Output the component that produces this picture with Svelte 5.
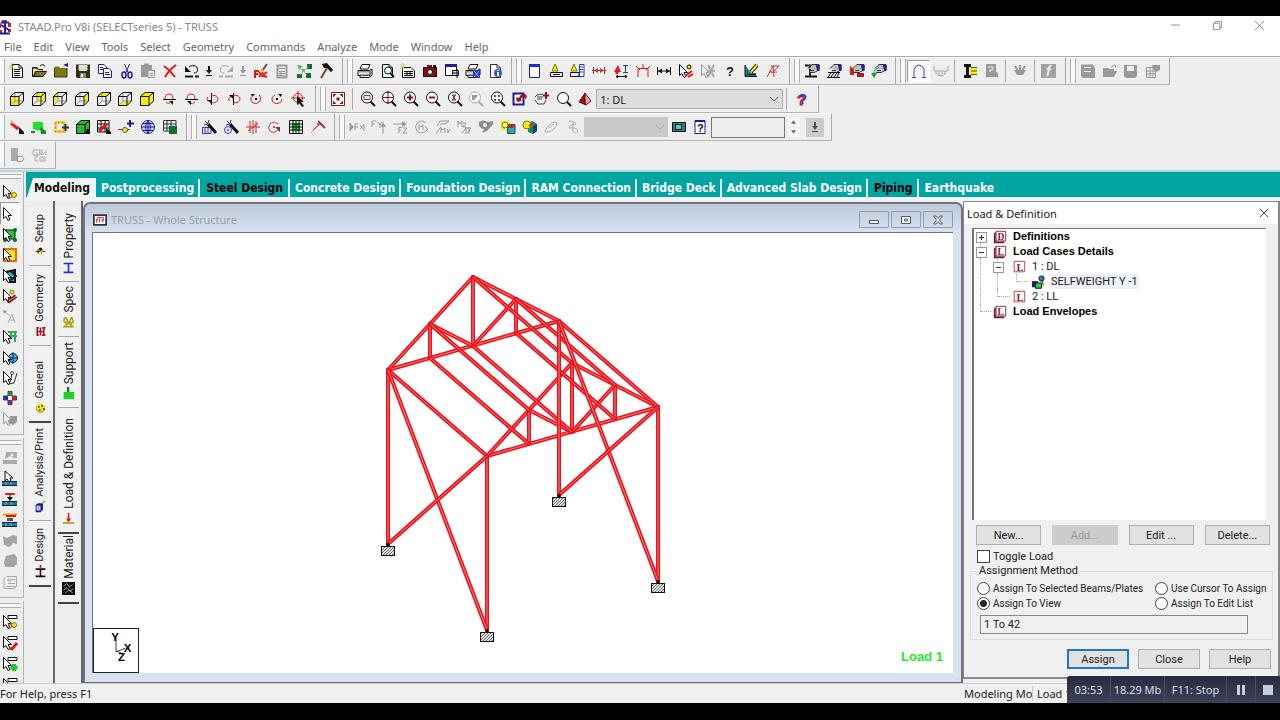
<script lang="ts">
  const fl = (d: string, c: string) => `<path d="${d}" fill="${c}"/>`;
  const st = (d: string, c: string, w = 1) => `<path d="${d}" fill="none" stroke="${c}" stroke-width="${w}"/>`;
  const dot = (x: number, y: number, r: number, c: string, s = 'none') =>
    `<circle cx="${x}" cy="${y}" r="${r}" fill="${c}" stroke="${s}"/>`;
  const txt = (x: number, y: number, size: number, c: string, t: string) =>
    `<text x="${x}" y="${y}" font-size="${size}" font-weight="bold" fill="${c}">${t}</text>`;

  const K = '#111';
  const G = '#999';
  const R = '#dd1a1a';
  const B = '#1c1c9c';
  const Y = '#f6ee10';
  const O = '#7d7a12';
  const GR = '#12a32c';

  const cube = (face: string, color = Y) =>
    fl(face, color) +
    st('M6 2V10H14M6 10L2 14', '#999') +
    st('M1.5 5.5H10v9H1.5zL6 1.5H14.5L10 5.5M14.5 1.5V10L10 14.5', K);
  const solidCube = (c: string) =>
    fl('M1.5 5.5L6 1.5H14.5V10L10 14.5H1.5z', c) + st('M1.5 5.5H10v9H1.5zL6 1.5H14.5L10 5.5M14.5 1.5V10L10 14.5', K);
  const lens = (inner: string, c = K) =>
    dot(7, 6.5, 5.5, '#fff', c) + st('M10.5 10.5L15 15', c, 2) + inner;
  const page = (c = K) => `<path d="M3.5 1.5H10L13.5 5V14.5H3.5z" fill="#fff" stroke="${c}"/>` + st('M10 1.5V5H13.5', c);
  const cursor = '<path d="M1.5 1.5V12.5L4 10.5L6 14.5L8 13.5L6 9.5H9.5z" fill="#fff" stroke="#111"/>';
  const grayCursor = '<path d="M1.5 1.5V12.5L4 10.5L6 14.5L8 13.5L6 9.5H9.5z" fill="#eee" stroke="#999"/>';
  const disk = (c: string) => fl('M1 1.5H15V15H2L1 14z', c) + fl('M4 2.5H12V8H4zM5 10.5H11V14H5z', '#ddd');
  const printer = fl('M5 1H13L11 6H3z', '#fff') + st('M5 1.5H13L11 6H3zM1 7.500H13V12.500H1zM3 12V14.5H12L15 12V6L13 7', K) + fl('M1.5 8H12.5V9.500H1.5zM3 11H12V12.5H3z', '#999');
  const wand = st('M7 5L15 14', K, 3) + st('M4 2L8 6M8 1L7 4M3 6L6 5', '#333');
  const beamBase = fl('M0 10H15V14H0z', '#1976a6') + st('M0 10.5H15M0 14.5H15', '#123', 1) + st('M4 11V14M9 11V14', '#6cc');
  const hand = fl('M7 1H15V7H12L9 9H5L9 6H4L7 4z', '#bbb') + st('M4 5.500L8 1.500H15V7L10 9.500H5M6 7.500H10', '#333') + fl('M12 2H15.5V8H13z', B);

  const icons: Record<string, string> = {
    app: fl('M5 1H10V3H5zM1 5L4 4V9H1zM11 4H14V8H11zM2 11H5V14H2zM11 10H14V13H11z', '#c2203a') + st('M4 3.500H12M3 14.500H13M8 3V15M4 6L12 11', B, 2),
    new: page() + st('M5 6.5H11M5 8.5H11M5 10.5H11M5 12.5H11', K) + st('M0 2L5 6M0 6L5 2M2.5 0V7', '#d6c944'),
    open: fl('M1 5H6L7 6H12V8H15L12 14H1z', O) + fl('M2 6H6L7 7H11V8H4L2 12z', '#f2ec8a') + st('M1.5 13.5V4.5H6L7 6.5H11.5M3 13.5L5 8.5H15.5L12 13.5H1.5M9 3Q12 0 14 3.5', K),
    close: fl('M1 5L2 3.5H6L7 5H14V14H1z', O) + st('M1.5 5V14H14V5', '#3a390b') + fl('M10 2L15 0V4z', B),
    save: disk('#31310e') + fl('M3.5 2H12.5V7H3.5z', '#ddd') + fl('M5 10H11V15H5z', '#888') + fl('M6 11H8V14H6z', '#fff'),
    copy: '<path d="M1.500 1.500H7L9.500 4V10.500H1.500z" fill="#fff" stroke="#1c1c9c"/><path d="M6.500 5.500H12L14.500 8V14.500H6.500z" fill="#fff" stroke="#1c1c9c"/>' + st('M3 4.500H6M3 6.500H6M8 9.500H12M8 11.500H13', B),
    cut: st('M5.500 1L9 9.500M10.500 1L7 9.500', '#334') + `<ellipse cx="5" cy="12" rx="2" ry="3" fill="none" stroke="${B}" stroke-width="1.500"/><ellipse cx="11" cy="12" rx="2" ry="3" fill="none" stroke="${B}" stroke-width="1.500"/>`,
    paste: fl('M1 2H12V7H8V14H1zM4 0.5H9V3H4z', G) + '<path d="M8 7.500H14.500V14.500H8z" fill="#eee" stroke="#999"/>' + st('M9.500 10.500H13M9.500 12.500H13', G),
    del: st('M2 3Q8 7 13 14M14 2Q7 7 3 14', R, 2),
    undo: st('M5 3.500Q13 1 13.500 6Q14 10 10 10', K, 1) + fl('M1 3L1 9L7 9z', K) + st('M1 13.500H9M11 13.500H15', K, 2),
    redo: st('M11 3.500Q3 1 2.500 6Q2 10 6 10', '#aaa') + fl('M15 3L15 9L9 9z', '#aaa') + st('M1 13.500H5M7 13.500H15', '#aaa', 2),
    down: st('M8 3V8', K, 2) + fl('M5 7H11L8 11z', K) + st('M5 12.500H11', K),
    downGray: st('M8 3V8', G, 2) + fl('M5 7H11L8 11z', G) + st('M5 12.500H11', G),
    paint: st('M3 7V15M2 8H7M4 11H6M7 9L11 14M11 9L7 14M15 9L12 11V13L15 14', R, 2) + st('M10 8L15 1', '#555', 2) + fl('M7 9L10 5L12 8z', '#e8bb20'),
    calc: st('M3.500 2.500H12.500V14.500H3.500z', G, 2) + st('M5 5.500H11M5 8.500H11M5 10.500H11M5 12.500H11M7 8V13', G),
    cells: fl('M11 1H16V6H11zM1 11H6V15H1zM10 10H15V15H10z', '#126e2a') + fl('M1 2L7 3L3 7zM6 6H9V9H6z', '#54b060') + st('M3 4L11 12M12 4L4 12', '#8ac796'),
    hammer: st('M9 5L3 15', '#6d4a24', 2) + fl('M4 1L9 0L15 7L13 9L9 5L6 5z', K),
    print: printer,
    preview: page() + dot(9, 7.5, 3.5, '#dff', K) + st('M11 10L15 14', K, 2),
    report: '<path d="M2.500 4.500H11L14.500 8V14.500H2.500z" fill="#fff" stroke="#111"/>' + st('M4 8.500H13M4 10.500H13M4 12.500H13M7 8V13M10 8V13', K) + st('M0 1L5 6M5 1L0 6M3 0V7', '#d6c944'),
    camera: fl('M1 4H5V2H10V4H15V14H1z', '#7c1313') + st('M1.500 4.500H14.500V13.500H1.500z', '#300') + dot(8, 9, 2.500, '#eee', K) + fl('M11 2H14V4H11z', K),
    pageSetup: '<path d="M1.500 2.500H12.500V12.500H1.500z" fill="#fff" stroke="#111"/>' + fl('M1 1H13V4H1z', B) + '<path d="M8.500 7.500H14.500V12.500H8.500z" fill="#ddd" stroke="#111"/>' + st('M9 10H14M13 6V15', K),
    printPic: printer + fl('M8 7H15V15H8z', '#2436b5') + st('M9 8L14 14M14 8L9 14', '#9af'),
    info: page('#333') + dot(11, 10, 4, '#2c5bd7') + fl('M10 7H12V8H10zM10 9H12V13H10z', '#fff'),
    window: '<path d="M3.500 1.500H13.500V14.500H3.500z" fill="#fff" stroke="#1c1c9c"/>' + fl('M3 1H14V4H3z', '#1933c8'),
    labelA: fl('M4 8L7 1L10 8z', Y) + st('M4 8L7 1L10 8z', O) + '<path d="M2.500 9.500H14.500V13.500H2.500z" fill="#eee" stroke="#111"/>' + st('M5 11.500H12', K),
    labelB: fl('M2 8L5 1L8 8z', Y) + st('M2 8L5 1L8 8z', O) + '<path d="M1.500 9.500H10V13.500H1.500z" fill="#eee" stroke="#111"/><path d="M10.500 1.500H15V13.500H10.500z" fill="#fff" stroke="#2233bb"/>' + st('M11 4H14M11 6.500H14M11 9H14', '#2233bb'),
    dim: st('M1 7.500H15M2.500 4V11M13.500 4V11', R) + fl('M3 7.500L7 5V10zM13 7.500L9 5V10z', '#a44'),
    node: fl('M1 9L5 2L8 9z', R) + st('M4 9V11', R, 3) + st('M10 2.500H15M12.500 3V9M10 9.500H15', '#2436c5') + st('M3 13.500H14M5 12L3 13.500L5 15M12 12L14 13.500L12 15', K),
    frame: st('M3 14V5.500H13V14M1 3L5 7M11 7L15 3M8 1V6', R),
    span: st('M1.500 4V12M14.500 4V12M2 8H14', K) + fl('M2 8L6 5.500V10.500zM14 8L10 5.500V10.500z', K),
    pick: cursor + dot(11, 4, 2, Y, K) + st('M7 13L14 8M10 14L15 11', R, 2),
    pickGray: grayCursor + st('M8 2L14 14M14 2L8 14M7 8H15', '#aaa', 2),
    query: txt(4, 13, 13, K, '?'),
    edit: fl('M2 2L8 10H13V13H2z', '#127d7d') + st('M2 2V13.500H14M4 11.500H13', K) + st('M8 9L14 2', K, 4) + st('M8 9L14 2', Y, 2),
    annotate: st('M2 14L8 3L9 14M4 9H12M6 3H14L7 10', '#c23a3a'),
    beamH: st('M1 2.500H11M1 13.500H13M6 3V13', K, 2) + hand,
    hatchH: hand + st('M1 14.500H14M2 14L5 10M5 14L8 10M8 14L11 10M11 14L13 10M2 9.500H14', K),
    redH: fl('M1 3L5 6V12H1z', R) + hand + fl('M8 10H15V14H8z', '#a32121'),
    greenH: hand + st('M3 14V8L8 4', GR) + fl('M0 10H6L3 15z', GR),
    portal: st('M3 14V6Q5 2 8 2Q11 2 13 6V14', '#4545c8') + st('M1 14.500H5M11 14.500H15', '#a33'),
    uload: st('M1 3V8H15V3M3 8V11M6 8V13M9 8V13M12 8V11M3 10Q8 16 13 10', '#aaa'),
    ibeam: fl('M8 4H15V12H8z', Y) + st('M9 4.500H15M9 8H15M9 11.500H15', '#555') + st('M2 2.500H9M2 13.500H9M5.500 3V13', K, 3),
    sheet: fl('M3 1H13V9L15 10V14H5L3 15z', G) + st('M5 4H10V7H7V9', '#eee', 1),
    basket: st('M3 3L6 8M8 2V8M13 3L10 8', G, 2) + fl('M2 7H14L11 12H5z', G),
    fx: fl('M0 1H15V15H0z', '#a2a2a2') + `<text x="5" y="13" font-size="14" font-weight="bold" font-style="italic" fill="#eee">f</text>`,
    diskG: fl('M1 1.500H13L15 6V15H3L1 13z', G) + fl('M4 4H11V5H4zM4 8H11V9H4z', '#eee'),
    openG: fl('M1 5H6L7 6H12V8H15L12 14H1z', G) + st('M9 4L13 2L14 5', G),
    saveG: fl('M1 2H14V13L12 15H3L1 13z', G) + fl('M4 3H11V8H4z', '#eee'),
    tableG: st('M1.500 4.500H10.500V14.500H1.500zM2 8H10M2 11H10M5 5V14M8 5V14', G) + fl('M7 2H15V7L11 9L8 6z', G),
    cubeF: cube('M1.500 5.500H10V14.500H1.500z'),
    cubeB: cube('M6 1.500H14.500V10H6z'),
    cubeL: cube('M1.500 5.500L6 1.500V10L1.500 14.500z'),
    cubeR: cube('M10 5.500L14.500 1.500V10L10 14.500z'),
    cubeT: cube('M1.500 5.500L6 1.500H14.500L10 5.500z'),
    cubeD: cube('M1.500 14.500L6 10H14.500L10 14.500z'),
    cubeA: solidCube(Y),
    rotX1: st('M2 8.500H15', K) + st('M4 8Q4 3 8 3Q12 3 12 8M5 11Q6 13 9 12', R) + fl('M8 10H12V14z', K),
    rotX2: st('M2 8.500H15', K) + st('M4 8Q4 3 8 3Q12 3 12 8M7 12Q9 14 12 11', R) + fl('M8 10L4 10L8 14z', K),
    rotY1: st('M7.500 2V14', K) + st('M7 4Q14 4 14 8Q14 12 6 12M4 6Q2 8 4 10', R) + fl('M3 9H7V12z', K),
    rotY2: st('M7.500 2V14', K) + st('M7 4Q14 4 14 8Q14 12 7 12M3 10Q2 7 5 5', R) + fl('M3 4H7V8z', K),
    rotZ1: st('M11 4Q14 6 12 10Q9 14 5 12Q2 10 3 6', R) + fl('M3 3H7L4 6zM7 7H9V9H7z', K),
    rotZ2: st('M6 4Q2 6 3 9Q5 14 10 12Q13 11 13 8', R) + fl('M9 3H13L12 6zM7 7H9V9H7z', K),
    rotPick: dot(7, 7, 4.5, 'none', R) + st('M7 0V14M0 7H14', R) + fl('M6 5V14L8 12L11 16L13 15L10 11H13z', K),
    fit: '<path d="M1.500 1.500H14.500V14.500H1.500z" fill="#fff" stroke="#8b1414"/>' + fl('M3 3H6.500L3 6.500zM9.500 3H13V6.500zM3 9.500V13H6.500zM13 9.500V13H9.500zM6.500 6.500H9.500V9.500H6.500z', '#8b1414'),
    zoomWin: lens(st('M4 4.500H10V8.500H4z', '#a33')),
    zoomCross: lens(st('M7 0V13M1 6.500H13', '#8b1414') + fl('M5 2H9L7 0zM5 11H9L7 13z', '#8b1414')),
    zoomIn: lens(st('M4 6.500H10M7 3.500V9.500', '#8b1414', 2)),
    zoomOut: lens(st('M4 6.500H10', '#8b1414', 2)),
    zoomX: lens(st('M5 4H9M5 9H9M5.500 4L8.500 9M8.500 4L5.500 9', '#8b1414')),
    zoomPrev: lens(st('M5 9V5H9M9 4L5 9', G, 2), '#aaa'),
    zoomExt: lens(fl('M4 4H6V6H4zM8 4H10V6H8zM4 8H6V10H4zM8 8H10V10H8z', '#a33')),
    rotateView: '<path d="M1.500 2.500H11.500V13.500H1.500z" fill="#fff" stroke="#1c1c9c" stroke-width="2"/>' + fl('M5 11L4 6L7 7Q9 2 13 3Q16 5 14 8L12 6Q9 6 9 9L10 10z', '#a31616'),
    pan: st('M1 6L3 4L9 3M3 8H8M1 9L4 13H10L12 9M3 6H9', '#444', 1) + st('M12 1V8M9 4.500H15', '#8b1414', 2),
    glass: dot(7, 7, 5.5, '#fff', K) + st('M11 11L15 15', K, 2),
    pyramid: fl('M8 2L2 11L9 14z', '#8b1414') + fl('M8 2L9 14L14 10z', '#eda9a0') + st('M8 2L2 11L9 14L14 10zV14', '#611'),
    help: `<text x="3" y="14" font-size="15" font-weight="bold" fill="#c22" stroke="#c22">?</text>` + txt(4, 13, 15, '#2447b8', '?'),
    beamAdd: st('M2 4L9 10', R, 3) + st('M2 2L5 5', '#f0b020', 2) + fl('M9 7L15 13V15H10V11z', K),
    plateAdd: fl('M2 3H12V10H2z', '#26e02a') + dot(7, 7, 4.500, '#26e02a') + fl('M9 8L15 12V15H10zM0 12H4V14H0z', '#183'),
    surface: st('M2.500 3.500H11.500V12.500H2.500z', '#e87a10', 2) + `<path d="M2.500 3.500H11.500V12.500H2.500z" fill="none" stroke="${Y}" stroke-width="2" stroke-dasharray="2 2"/>` + st('M12.500 5V12M9 8.500H16', '#333', 2),
    solidAdd: solidCube('#27b333') + fl('M12 10H15V15H10z', K),
    gridAdd: st('M1.500 1.500H13V13H1.500zM5 1V13M9 1V13M1 5H13M1 9H13', K) + st('M3 12L11 5', R, 3) + fl('M10 9L15 13V15H10z', K),
    nodeAdd: st('M0 10.500H12', '#c02020') + dot(7, 11, 2.5, Y, '#555') + st('M12 1V8M9 4.500H16', B, 2),
    sphere: dot(8, 8, 6.5, '#cfd5ff', B) + st('M1.500 8H14.500M8 1.500V14.500M3 4.500H13M3 11.500H13M8 2Q3 8 8 14M8 2Q13 8 8 14', B),
    gridLock: st('M1.500 1.500H14V12H1.500zM5 1V12M9 1V12M1 5H14M1 9H14', '#333') + fl('M7 7H15V15H7z', '#126e2a'),
    wandGrid: st('M1.500 8.500H10V14.500H1.500zM4 8V14M7 8V14', '#3436d5') + wand,
    wandNode: dot(5, 11, 3.5, 'none', '#3436d5') + dot(5, 11, 1, '#3436d5') + wand,
    mirror: st('M5 2V14M8 1V15M11 2V14M1 8H15M3 12L13 4', '#cc2a2a'),
    rotCopy: st('M12 5Q9 2 5 4Q1 8 4 12Q8 15 12 11', '#b34646', 1) + fl('M9 8H14V13z', '#733') + dot(8, 8, 1, R),
    gridTable: fl('M4 4H12V12H4z', '#2ad544') + st('M1.500 1.500H14.500V14.500H1.500zM5 1V15M11 1V15M1 5H15M1 11H15M8 1V15M1 8H15', K),
    split: st('M1 14L8 6', '#e7a83a', 1) + st('M8 2L15 9', '#c02a2a', 2) + st('M3 11L9 6', R) + st('M7 5L11 5', B),
    fx1: st('M1 4V12', G) + fl('M1 4L5 8L1 12z', G) + st('M6 11V5H9M6 8H9M11 6L14 10M14 6L11 10M15 5V12', G),
    fy: st('M2 8V2H6M2 5H5M8 3L10 6L12 3M10 6V9', G) + fl('M11 8L13 3L16 8z', G) + st('M13 5V15', G),
    fz: st('M1 5H13M7 8V14M7 8.500H10M7 11H9M11 9H15L11 14H15', G) + fl('M10 2L15 5L10 8z', G),
    mx: st('M12 4Q8 0 3 4Q0 8 3 12Q8 16 13 11M5 11V6L7 8L9 6V11M11 7L14 11', G),
    my: st('M2 7L5 2H14L10 5H5M1 14L6 8M6 14V9L8 11L10 9V14M12 10L14 14M15 10L12 14', G),
    mz: st('M1 8V2L3 5L5 2V8M6 4H9L6 8H9M5 14L9 9H14L10 14M9 8V15M12 8V15', G),
    stress: fl('M1 3Q5 0 10 3L15 2V5L9 12L4 14L6 10Q0 9 1 3z', '#8d8d8d') + dot(7, 6, 2, '#eee'),
    contour: '<path d="M7.500 5.500H15V14.500H7.500z" fill="#29a7d8" stroke="#163"/>' + fl('M8 6H14.500V9H8z', '#c22') + fl('M8 11H11V14H8z', '#27b34c') + fl('M1 2L9 1V5H5V11H1z', Y) + dot(5, 6, 3, '#f9f48d', O),
    contour3d: fl('M6 5L10 2L15 5V12L11 15L6 13z', '#0e8b55') + fl('M11 7L15 5V12L11 15z', '#123a8c') + dot(5, 6, 4, Y, O) + fl('M7 5H11V8H7z', '#d42'),
    shape: st('M2 13Q3 7 11 3L14 4Q13 11 5 13zM6 9L11 5', '#aaa'),
    wave: st('M4 2Q10 2 11 5Q4 6 4 9Q12 8 13 12Q10 16 8 12V3', '#aaa'),
    monitor: '<path d="M1.500 3.500H14.500V12.500H1.500z" fill="#367b7b" stroke="#111"/><path d="M4.500 5.500H10.500V10.500H4.500z" fill="#1ce0e0" stroke="#111"/>',
    ask: '<path d="M3 1.500H13V14.500H3z" fill="#fff" stroke="#1c1c9c"/>' + fl('M3 1H13V3H3z', B) + txt(5, 13, 11, K, '?'),
    dockA: fl('M2 1H9V14H2z', '#aaa') + '<path d="M8.500 9.500H13L15 12L13 14.500H8.500z" fill="#eee" stroke="#999"/>',
    dockB: st('M2 3H9V8H2zM4 8V14H7M6 5V11M11 2V7M8 5L11 8L14 5M15 3V8M9 10H14V14H9zM11 12H13', '#aaa', 1),
    cur: cursor,
    curNode: cursor + dot(12, 11, 2.5, Y, O) + dot(8, 12, 2, 'none', '#a55'),
    curPlate: fl('M3 3H13V12H3z', '#22c932') + st('M3 3H13V12H3z', K) + dot(13, 3, 2, '#163') + dot(13, 13, 2, '#163') + dot(3, 13, 2, '#163') + cursor,
    curSurf: '<path d="M2 2H14V14H2z" fill="#ffe41f" stroke="#e36b12" stroke-width="2"/>' + cursor,
    curSolid: fl('M3 4L13 2V14L5 14z', '#38b4cc') + st('M4 4L13 2V14L6 14M9 3L14 8L7 13', K, 2) + cursor,
    curPhys: cursor + dot(10, 4, 2, Y, O) + st('M6 14L14 8', '#8b1414', 4) + st('M7 13L14 8', '#f08484'),
    curText: st('M3 3L8 7M6 14L10 5L13 14M7 11H12', '#aaa') + fl('M1 1L5 2L2 5z', G),
    curEdge: st('M6 3H15M7 7H15M13 2V13M9 3V10', '#3aa35f', 2) + cursor,
    curSup: dot(11, 8, 4.5, '#37bcd0', K) + st('M11 2V14M5 8H16', B) + cursor,
    curPipe: cursor + st('M15 3L12 13L7 14M10 4L8 12', '#333', 1) + dot(10, 3, 1.500, 'none', '#555'),
    plus: fl('M6 1H10V6H6z', GR) + fl('M1 6H6V10H1z', '#1a2cc0') + fl('M10 6H15V10H10z', '#e01b1b') + fl('M6 10H10V15H6z', '#7c1cb8') + st('M6 1.500H10V6H14.500V10H10V14.500H6V10H1.500V6H6z', '#444'),
    curGray: grayCursor + fl('M8 5H15V11L11 14L7 12z', G),
    loadG: fl('M1 10H15V14H1zM4 2H15V8H12L8 6L3 9z', '#aaa') + dot(10, 5, 1.5, '#eee'),
    loadCur: beamBase + '<path d="M3 0V10L5 8L7 11L9 10L8 7H11z" fill="#fff" stroke="#111"/>',
    loadBeam: beamBase + st('M1 3H15', '#c22', 2) + dot(2, 3, 1.5, '#fdc') + dot(14, 3, 1.5, '#fdc') + fl('M5 6H11L8 10z', K) + st('M8 4V8', K),
    loadTxt: beamBase + st('M1 2.500H15', '#e3a512', 2) + st('M4 4L14 4', R, 2) + fl('M5 6H11V9H5z', '#555'),
    blobA: fl('M1 3L5 5L11 2L15 3V11L11 10L8 14L2 12z', '#a4a4a4'),
    blobB: fl('M4 3L12 1L15 4V11L12 14H3L2 9z', '#a4a4a4'),
    pagesG: st('M4.500 2.500H14.500V12.500H4.500M3 4H2V14.500H13V12.500M6 5H9V7H6zM10 5.500H13M6 9.500H13', '#aaa'),
    selY: '<path d="M6 1.500H15V4.500H6z" fill="#fff" stroke="#111"/>' + cursor + dot(12, 11, 2.5, Y, O) + dot(8, 12, 2, 'none', '#a55'),
    selR: '<path d="M6 1.500H15V4.500H6z" fill="#fff" stroke="#111"/>' + cursor + st('M8 13L10 14L15 8', R, 3),
    selG: '<path d="M6 1.500H15V4.500H6z" fill="#fff" stroke="#111"/>' + cursor + st('M12 8V15M8.500 11.500H15.500', '#1fc733', 4),
    setup: st('M2 8H14M5 5V11', K) + fl('M6 5H12L9 13z', '#d8b90c') + dot(8, 5, 2, K),
    geometry: st('M3 3.500H6M3 12.500H6M4 3V13M8 3V13M12 3V13M10 3.500H14M10 12.500H14M4 8H12', '#9d1a2d', 2),
    general: dot(8, 9, 5, Y, O) + fl('M3 6L7 2L12 4L14 10H3z', Y) + fl('M5 6H7V8H5zM9 5H11V7H9zM6 10H8V12H6zM11 9H13V11H11z', '#333'),
    analysis: fl('M2 6L5 4H11V12L8 15H2z', B) + fl('M3 7H8V13H3z', '#b6c2d6') + st('M10 4L14 1', '#8bc320', 2),
    design: st('M2 14H14M2 5H14M8 5V14', K, 2) + st('M8 0V4', R, 2),
    property: st('M2 3H14M2 14H14M8 3V14', '#1b30e5', 2),
    spec: st('M3 3Q1 8 5 8Q8 8 6 4Q4 1 3 3M11 3Q8 8 12 9Q15 8 13 4Q12 1 11 3M3 13L8 8L13 13z', '#aba40c', 2),
    support: fl('M2 6H15V15H2z', '#1dd128') + fl('M6 0H9V6H6z', '#187c1b'),
    loads: st('M1 13.500H15', '#a9a012', 2) + st('M8 1V11', R, 2) + fl('M5 8H11L8 13z', R),
    material: fl('M0 0H16V16H0z', K) + st('M2 5L6 2L9 6L13 3M2 10L6 7L10 11L14 8M4 14L8 10L13 13', '#bbb', 1),
    def: '<path d="M3.500 1.500H14.500V12.500H3.500z" fill="#fff" stroke="#8b1a2a"/>' + fl('M1 4L3 2V13H14L12 15H1z', '#631a4a') + `<text x="5" y="11" font-size="11" font-weight="bold" font-family="Liberation Serif, serif" fill="#8b1a2a">D</text>`,
    cases: '<path d="M3.500 1.500H14.500V12.500H3.500z" fill="#fff" stroke="#8b1a2a"/>' + fl('M1 4L3 2V13H14L12 15H1z', '#631a4a') + `<text x="5" y="11" font-size="11" font-weight="bold" font-family="Liberation Serif, serif" fill="#8b1a2a">L</text>`,
    load: '<path d="M2.500 1.500H14.500V13.500H2.500z" fill="#fff" stroke="#b0303c"/><text x="5" y="12" font-size="12" font-weight="bold" font-family="Liberation Serif, serif" fill="#8b1a2a">L</text>',
    weight: fl('M1 7H8V14H1z', '#1a1a8c') + fl('M5 9H12V16H5z', '#1edc28') + st('M5 9H12V15H5z', K) + dot(12, 4, 3, '#2a7fa8', K) + st('M13 7L14 12', K),
    doc: '<path d="M1 2.500H15V13.500H1z" fill="#fff" stroke="#333" stroke-width="2"/>' + st('M4 11L5 5H12L11 11M8 5L7 11M3 8H6M9 8H12', '#a22')
  };

  const rows = [
    [
      { width: 348, items: 'new open close save copy cut paste del undo down redo downGray paint calc cells hammer' },
      { width: 169, items: 'print preview report camera pageSetup printPic info' },
      { width: 278, items: 'window labelA labelB dim node frame span pick pickGray query edit annotate' },
      { width: 106, items: 'beamH hatchH redH greenH' },
      { width: 170, items: 'portal uload | ibeam sheet | basket | fx' },
      { width: 104, items: 'diskG openG saveG tableG' }
    ],
    [
      { width: 321, items: 'cubeF cubeB cubeL cubeR cubeT cubeD cubeA rotX1 rotX2 rotY1 rotY2 rotZ1 rotZ2 rotPick' },
      { width: 503, items: 'fit | zoomWin zoomCross zoomIn zoomOut zoomX zoomPrev zoomExt rotateView pan glass pyramid #load | help' }
    ],
    [
      { width: 192, items: 'beamAdd plateAdd surface solidAdd gridAdd nodeAdd sphere gridLock' },
      { width: 148, items: 'wandGrid wandNode mirror rotCopy gridTable split' },
      { width: 497, items: 'fx1 fy fz mx my mz stress contour contour3d shape wave #mode monitor ask #value' }
    ],
    [{ width: 61, items: 'dockA dockB' }]
  ];

  const sideBars = [
    { height: 263, items: 'curNode cur curPlate curSurf curSolid curPhys curText curEdge curSup curPipe plus curGray' },
    { height: 160, items: 'loadG loadCur loadBeam loadTxt blobA blobB pagesG' },
    { height: 101, items: 'selY selR selG selY' }
  ];

  const menus = ['File', 'Edit', 'View', 'Tools', 'Select', 'Geometry', 'Commands', 'Analyze', 'Mode', 'Window', 'Help'];
  const modes = ['Modeling', 'Postprocessing', 'Steel Design', 'Concrete Design', 'Foundation Design', 'RAM Connection', 'Bridge Deck', 'Advanced Slab Design', 'Piping', 'Earthquake'];
  const darkModes = ['Steel Design', 'Piping'];

  const pageTabs = [
    { name: 'Setup', icon: 'setup', size: 59 },
    { name: 'Geometry', icon: 'geometry', size: 80 },
    { name: 'General', icon: 'general', size: 77 },
    { name: 'Analysis/Print', icon: 'analysis', size: 98 },
    { name: 'Design', icon: 'design', size: 66 }
  ];
  const subTabs = [
    { name: 'Property', icon: 'property', size: 75 },
    { name: 'Spec', icon: 'spec', size: 55 },
    { name: 'Support', icon: 'support', size: 71 },
    { name: 'Load & Definition', icon: 'loads', size: 126 },
    { name: 'Material', icon: 'material', size: 70 }
  ];

  const tree = [
    { cells: ['plus first'], icon: 'def', text: 'Definitions', bold: true },
    { cells: ['minus'], icon: 'cases', text: 'Load Cases Details', bold: true },
    { cells: ['line', 'minus'], icon: 'load', text: '1 : DL' },
    { cells: ['line', 'line', 'elbow'], icon: 'weight', text: 'SELFWEIGHT Y -1', selected: true },
    { cells: ['line', 'elbow'], icon: 'load', text: '2 : LL' },
    { cells: ['elbow'], icon: 'cases', text: 'Load Envelopes', bold: true }
  ];

  // one truss outline, drawn twice and joined by purlins
  const bottom = [[295, 137], [337, 125], [380, 113], [423, 100], [466, 88]];
  const top = [[337, 91], [380, 44], [423, 66]];
  const bay = [99, 86];
  const columnHeight = 174;

  const truss = [
    [bottom[0], bottom[4]], [bottom[0], top[1]], [top[1], bottom[4]],
    [top[0], bottom[1]], [top[1], bottom[2]], [top[2], bottom[3]],
    [top[0], bottom[2]], [top[2], bottom[2]]
  ];
  const shift = (p: number[]) => [p[0] + bay[0], p[1] + bay[1]];
  const foot = (p: number[]) => [p[0], p[1] + columnHeight];
  const heads = [bottom[0], shift(bottom[0]), bottom[4], shift(bottom[4])];
  const feet = heads.map(foot);
  const members = [
    ...truss,
    ...truss.map(([a, b]) => [shift(a), shift(b)]),
    ...[...bottom, ...top].map((p) => [p, shift(p)]),
    ...heads.map((p) => [p, foot(p)]),
    [heads[0], feet[1]], [feet[0], heads[1]],
    [heads[2], feet[3]], [feet[2], heads[3]]
  ];

  let activeMode = 'Modeling';
  let method = 'view';
  let toggleLoad = false;
  let assignList = '1 To 42';
</script>

{#snippet icon(name)}
  <svg class="icon" viewBox="0 0 16 16" aria-hidden="true">{@html icons[name]}</svg>
{/snippet}

<div class="screen">
  <header class="titlebar">
    {@render icon('app')}
    <span class="title">STAAD.Pro V8i (SELECTseries 5) - TRUSS</span>
    <button aria-label="Minimize"><svg viewBox="0 0 12 12"><path d="M1 5.500H11" /></svg></button>
    <button aria-label="Restore"><svg viewBox="0 0 12 12"><path d="M1.500 3.500H8.500V10.500H1.500zM3.500 3.500V1.500H10.500V8.500H8.500" /></svg></button>
    <button aria-label="Close"><svg viewBox="0 0 12 12"><path d="M1 1L11 11M11 1L1 11" /></svg></button>
  </header>

  <nav class="menu">
    {#each menus as item}
      <button>{item}</button>
    {/each}
  </nav>

  <div class="toolbars">
    {#each rows as row}
      <div class="row">
        {#each row as bar}
          <div class="bar" style:width="{bar.width}px">
            <span class="grip"></span>
            {#each bar.items.split(' ') as item}
              {#if item === '|'}
                <span class="sep"></span>
              {:else if item === '#load'}
                <select class="load" aria-label="Load case"><option>1: DL</option></select>
              {:else if item === '#mode'}
                <select class="modeshape" aria-label="Mode shape" disabled><option></option></select>
              {:else if item === '#value'}
                <input class="value" aria-label="Value" />
                <span class="spin">
                  <button aria-label="Up"><svg viewBox="0 0 6 4"><path d="M0 4L3 0L6 4z" /></svg></button>
                  <button aria-label="Down"><svg viewBox="0 0 6 4"><path d="M0 0L3 4L6 0z" /></svg></button>
                </span>
                <button class="apply" aria-label="Apply">{@render icon('down')}</button>
              {:else}
                <button class="tool" class:narrow={item.startsWith('down')} class:pressed={item === 'portal'} aria-label={item}>{@render icon(item)}</button>
              {/if}
            {/each}
          </div>
        {/each}
      </div>
    {/each}
  </div>

  <div class="workspace">
    <aside class="sidebars">
      {#each sideBars as bar}
        <div class="sidebar" style:height="{bar.height}px">
          <span class="hgrip"></span>
          {#each bar.items.split(' ') as item}
            <button class="tool" class:pressed={item === 'cur'} aria-label={item}>{@render icon(item)}</button>
          {/each}
        </div>
      {/each}
    </aside>

    <div class="main">
      <nav class="modes">
        {#each modes as mode}
          <button class:active={mode === activeMode} class:dark={darkModes.includes(mode)} on:click={() => (activeMode = mode)}>{mode}</button>
        {/each}
      </nav>

      <div class="content">
        {#each [pageTabs, subTabs] as tabs}
          <div class="tabs">
            {#each tabs as tab}
              <button style:height="{tab.size}px" class:current={tab.name === 'General' || tab.name === 'Load & Definition'}>
                <span>{tab.name}</span>
                {@render icon(tab.icon)}
              </button>
            {/each}
          </div>
        {/each}

        <section class="mdi">
          <div class="caption">
            {@render icon('doc')}
            <span>TRUSS - Whole Structure</span>
            <button aria-label="Minimize"><svg viewBox="0 0 12 12"><path d="M1.500 6.500H10.500V9.500H1.500z" /></svg></button>
            <button aria-label="Restore"><svg viewBox="0 0 12 12"><path d="M1.500 2.500H10.500V9.500H1.500zM4.500 5H7.500V7H4.500z" /></svg></button>
            <button aria-label="Close"><svg viewBox="0 0 12 12"><path d="M1.500 2H4L6 4.500L8 2H10.500L7.500 6L10.500 10H8L6 7.500L4 10H1.500L4.500 6z" /></svg></button>
          </div>
          <div class="canvas">
            <svg class="model" viewBox="0 0 860 440" role="img" aria-label="Truss structure">
              <defs>
                <pattern id="hatch" width="3" height="3" patternUnits="userSpaceOnUse">
                  <rect width="3" height="3" fill="#e4e4e4" />
                  <path d="M0 3L3 0" stroke="#666" />
                </pattern>
              </defs>
              {#each members as [a, b]}
                <line x1={a[0]} y1={a[1]} x2={b[0]} y2={b[1]} class="edge" />
                <line x1={a[0]} y1={a[1]} x2={b[0]} y2={b[1]} class="core" />
              {/each}
              {#each feet as [x, y]}
                <path d="M{x} {y - 1}v4" stroke="#000" stroke-width="3" />
                <rect x={x - 6.5} y={y + 2.5} width="13" height="9" fill="url(#hatch)" stroke="#111" />
              {/each}
            </svg>
            <svg class="axes" viewBox="0 0 46 45" aria-hidden="true">
              <path d="M23 9V24L33 20M24 23L30 26" />
              <text x="18" y="13">Y</text>
              <text x="31" y="24">X</text>
              <text x="25" y="34">Z</text>
            </svg>
            <span class="loadlabel">Load 1</span>
          </div>
        </section>

        <section class="dialog">
          <div class="heading">
            <span>Load &amp; Definition</span>
            <button aria-label="Close"><svg viewBox="0 0 12 12"><path d="M1 1L11 11M11 1L1 11" /></svg></button>
          </div>
          <ul class="tree">
            {#each tree as node}
              <li>
                {#each node.cells as cell}<i class="cell {cell}"></i>{/each}
                {@render icon(node.icon)}
                <span class:bold={node.bold} class:selected={node.selected}>{node.text}</span>
              </li>
            {/each}
          </ul>
          <div class="actions">
            <button>New...</button>
            <button disabled>Add...</button>
            <button>Edit ...</button>
            <button>Delete...</button>
          </div>
          <label class="toggle"><input type="checkbox" bind:checked={toggleLoad} />Toggle Load</label>
          <fieldset>
            <legend>Assignment Method</legend>
            <div class="options">
              <label><input type="radio" bind:group={method} value="selected" />Assign To Selected Beams/Plates</label>
              <label><input type="radio" bind:group={method} value="cursor" />Use Cursor To Assign</label>
              <label><input type="radio" bind:group={method} value="view" />Assign To View</label>
              <label><input type="radio" bind:group={method} value="list" />Assign To Edit List</label>
            </div>
            <input class="list" aria-label="Assign list" bind:value={assignList} />
          </fieldset>
          <div class="closing">
            <button class="default">Assign</button>
            <button>Close</button>
            <button>Help</button>
          </div>
        </section>
      </div>
    </div>
  </div>

  <footer class="status">
    <span class="hint">For Help, press F1</span>
    <span class="cell1">Modeling Mo</span>
    <span class="cell2">Load 1</span>
    <div class="recorder">
      <span>03:53</span>
      <span>18.29 Mb</span>
      <span>F11: Stop</span>
      <button aria-label="Pause"><svg viewBox="0 0 10 10"><path d="M1 0H4V10H1zM6 0H9V10H6z" /></svg></button>
      <button aria-label="Stop"><svg viewBox="0 0 10 10"><path d="M0 0H10V10H0z" /></svg></button>
    </div>
  </footer>
</div>

<style>
  :global(body) {
    background: #000;
  }
  .screen {
    box-sizing: border-box;
    height: 100vh;
    padding: 16px 0 17px;
    display: flex;
    flex-direction: column;
    overflow: hidden;
    background: #000;
    color: #222;
    font-family: "Noto Sans", "Open Sans", sans-serif;
    font-size: 11px;
  }
  .screen * {
    box-sizing: border-box;
  }
  button, input, select {
    font: inherit;
    color: inherit;
    margin: 0;
    padding: 0;
    border: 0;
    border-radius: 0;
    background: none;
  }
  .icon {
    width: 16px;
    height: 16px;
    flex: none;
    display: block;
    font-family: "Liberation Sans", sans-serif;
  }

  .titlebar {
    flex: none;
    height: 21px;
    display: flex;
    align-items: center;
    background: #fff;
    color: #888;
  }
  .titlebar .icon {
    margin-left: -3px;
  }
  .title {
    flex: 1;
    margin-left: 5px;
  }
  .titlebar button {
    width: 42px;
    height: 20px;
  }
  .titlebar button svg {
    width: 11px;
    height: 11px;
    fill: none;
    stroke: #888;
  }
  .menu {
    flex: none;
    height: 19px;
    display: flex;
    align-items: center;
    gap: 12px;
    padding-left: 4px;
    background: #fff;
    color: #666;
  }

  .toolbars {
    flex: none;
    height: 116px;
    background: #eee;
    border-top: 1px solid #aaa;
    border-bottom: 2px solid #b4d6d6;
    overflow: hidden;
  }
  .row {
    display: flex;
    height: 28px;
    margin-left: -5px;
  }
  .bar {
    flex: none;
    display: flex;
    align-items: center;
    padding: 0 5px 0 4px;
    border-right: 1px solid #a8a8a8;
    border-bottom: 1px solid #b4b4b4;
    border-top: 1px solid #fff;
  }
  .grip {
    flex: none;
    width: 6px;
    height: 24px;
    margin-right: 1px;
    border: solid #b0b0b0;
    border-width: 0 1px;
    background: #f8f8f8;
  }
  .tool {
    flex: 1 1 0;
    min-width: 0;
    height: 22px;
    display: flex;
    align-items: center;
    justify-content: center;
  }
  .tool.narrow {
    flex: 0 0 12px;
    overflow: hidden;
  }
  .tool.pressed {
    background: #f8f8f8;
    border: 1px solid;
    border-color: #999 #fff #fff #999;
  }
  .sep {
    flex: none;
    width: 1px;
    height: 22px;
    margin: 0 4px 0 3px;
    background: #aaa;
  }
  select.load {
    flex: none;
    width: 187px;
    height: 20px;
    padding: 0 3px;
    appearance: none;
    border: 1px solid #b0b0b0;
    background: #ddd url("data:image/svg+xml,%3Csvg xmlns='http://www.w3.org/2000/svg' width='8' height='6'%3E%3Cpath d='M0 1L4 5L8 1' fill='none' stroke='%23555'/%3E%3C/svg%3E") no-repeat right 4px center;
  }
  select.modeshape {
    flex: none;
    width: 84px;
    height: 20px;
    appearance: none;
    opacity: 1;
    background: #c8c8c8 url("data:image/svg+xml,%3Csvg xmlns='http://www.w3.org/2000/svg' width='8' height='6'%3E%3Cpath d='M0 1L4 5L8 1' fill='none' stroke='%23aaa'/%3E%3C/svg%3E") no-repeat right 4px center;
  }
  .value {
    flex: none;
    width: 74px;
    height: 21px;
    border: 1px solid #777;
    background: #eee;
  }
  .spin {
    flex: none;
    width: 12px;
    margin: 0 6px 0 3px;
    display: grid;
    gap: 1px;
  }
  .spin button {
    height: 9px;
    display: grid;
    place-items: center;
    background: #f6f6f6;
  }
  .spin svg {
    width: 5px;
    height: 4px;
    fill: #666;
  }
  .apply {
    flex: none;
    width: 18px;
    height: 19px;
    margin-right: 2px;
    display: grid;
    place-items: center;
    background: #bbb;
    opacity: 0.7;
  }

  .workspace {
    flex: 1;
    min-height: 0;
    display: flex;
    background: #eee;
  }
  .sidebars {
    flex: none;
    width: 26px;
    overflow: hidden;
  }
  .sidebar {
    width: 24px;
    display: flex;
    flex-direction: column;
    padding: 2px 2px 5px 0;
    border: solid #b4b4b4;
    border-width: 0 1px 1px 0;
    margin-bottom: 3px;
  }
  .sidebar .tool {
    width: 20px;
  }
  .hgrip {
    flex: none;
    height: 5px;
    margin-bottom: 3px;
    border: solid #b0b0b0;
    border-width: 1px 0;
    background: #f8f8f8;
  }

  .main {
    flex: 1;
    min-width: 0;
    display: flex;
    flex-direction: column;
  }
  .modes {
    flex: none;
    height: 29px;
    display: flex;
    align-items: flex-end;
    padding: 0 0 0 1px;
    background: #00a5a2;
    border-bottom: 4px solid #f4f4f4;
    font-family: "DejaVu Sans Condensed", "Noto Sans", sans-serif;
    font-size: 12px;
    font-weight: bold;
    color: #fff;
  }
  .modes button {
    height: 18px;
    padding: 0 4px 0 5px;
    border-right: 2px solid #e8ffff;
    white-space: nowrap;
    line-height: 18px;
  }
  .modes button:last-child {
    border: 0;
  }
  .modes .dark {
    padding-right: 5px;
    padding-left: 6px;
    color: #000;
  }
  .modes .active {
    height: 19px;
    padding-left: 7px;
    background: #f4f4f4;
    color: #111;
    clip-path: polygon(6px 0, 100% 0, 100% 100%, 0 100%);
  }

  .content {
    flex: 1;
    min-height: 0;
    display: flex;
  }
  .tabs {
    flex: none;
    width: 29px;
    padding: 6px 2px 0 3px;
    display: flex;
    flex-direction: column;
    border-right: 2px solid #666;
    font-family: Roboto, "Liberation Sans", sans-serif;
    font-size: 11px;
  }
  .tabs + .tabs {
    width: 28px;
    font-size: 12px;
  }
  .tabs button {
    display: flex;
    flex-direction: column;
    align-items: center;
    justify-content: flex-end;
    gap: 3px;
    padding-bottom: 7px;
    border-bottom: 1px solid #aaa;
    background: #f1f1f1;
  }
  .tabs span {
    writing-mode: vertical-rl;
    transform: rotate(180deg);
    line-height: 16px;
    white-space: nowrap;
  }
  .tabs .icon {
    width: 13px;
    height: 13px;
  }
  .tabs .current,
  .tabs button:last-child {
    border-bottom: 2px solid #444;
  }

  .mdi {
    flex: 1;
    min-width: 0;
    margin-top: 1px;
    display: flex;
    flex-direction: column;
    padding: 0 8px 9px 7px;
    border: 2px solid #6e747c;
    border-bottom-width: 1px;
    border-radius: 7px 7px 0 0;
    background: linear-gradient(#bccad9, #d9e2f1 30px);
  }
  .caption {
    flex: none;
    height: 28px;
    display: flex;
    align-items: center;
    gap: 2px;
    padding-top: 3px;
    color: #999fa8;
  }
  .caption span {
    flex: 1;
    margin-left: 2px;
  }
  .caption .icon {
    width: 14px;
    height: 14px;
    margin-left: 1px;
  }
  .caption button {
    width: 30px;
    height: 17px;
    display: grid;
    place-items: center;
    border: 1px solid #939fb0;
    border-radius: 1px;
  }
  .caption button svg {
    width: 12px;
    height: 12px;
    fill: #f5f7fb;
    stroke: #555c68;
  }
  .canvas {
    flex: 1;
    min-height: 0;
    position: relative;
    background: #fff;
    border: solid #6e747c;
    border-width: 1px 0 0 1px;
  }
  .model {
    display: block;
    width: 100%;
    height: 100%;
  }
  .edge {
    stroke: #ee1119;
    stroke-width: 4;
    stroke-linecap: round;
  }
  .core {
    stroke: #fb8080;
    stroke-width: 1;
  }
  .axes {
    position: absolute;
    left: 0;
    bottom: 0;
    width: 46px;
    height: 45px;
    border: 1px solid #222;
    background: #fff;
    font-family: "Liberation Sans", sans-serif;
    font-size: 12px;
    font-weight: bold;
  }
  .axes path {
    fill: none;
    stroke: #333;
  }
  .loadlabel {
    position: absolute;
    right: 10px;
    bottom: 9px;
    font-family: "Liberation Sans", sans-serif;
    font-size: 13px;
    font-weight: bold;
    color: #2de52d;
  }

  .dialog {
    flex: none;
    width: 317px;
    height: 478px;
    display: flex;
    flex-direction: column;
    border: 1px solid #888;
    border-width: 1px 2px 2px 1px;
    background: #f0f0f0;
    font-family: Roboto, "Liberation Sans", sans-serif;
    font-size: 11px;
  }
  .heading {
    flex: none;
    height: 22px;
    display: flex;
    align-items: center;
    justify-content: space-between;
    padding: 0 9px 0 3px;
    background: #fff;
    font-family: "Noto Sans", "Open Sans", sans-serif;
  }
  .heading svg {
    width: 10px;
    height: 10px;
    display: block;
    fill: none;
    stroke: #222;
  }
  .tree {
    flex: 1;
    margin: 4px 12px 5px 8px;
    padding: 0;
    list-style: none;
    border: solid #777;
    border-width: 1px 0 0 2px;
    background: #fff;
  }
  .tree li {
    height: 15px;
    display: flex;
    align-items: center;
  }
  .tree .icon {
    width: 14px;
    height: 14px;
    margin: 0 5px 0 2px;
  }
  .tree span {
    padding: 0 1px;
    line-height: 15px;
  }
  .tree .bold {
    font-family: "Liberation Sans", sans-serif;
    font-weight: bold;
    color: #000;
  }
  .tree .selected {
    background: #eef0fa;
  }
  .cell {
    flex: none;
    position: relative;
    width: 19px;
    height: 15px;
  }
  .cell:first-child {
    width: 17px;
  }
  .cell::before {
    content: "";
    position: absolute;
    left: 6px;
    top: 0;
    bottom: 0;
    border-left: 1px dotted #aaa;
  }
  .cell.first::before {
    top: 8px;
  }
  .cell.elbow::before {
    bottom: 7px;
  }
  .elbow::after {
    content: "";
    position: absolute;
    left: 7px;
    right: 0;
    top: 7px;
    border-top: 1px dotted #aaa;
  }
  .plus::after,
  .minus::after {
    content: "";
    position: absolute;
    left: 2px;
    top: 3px;
    width: 9px;
    height: 9px;
    border: 1px solid #999;
    background: linear-gradient(#333, #333) center / 5px 1px no-repeat, #fff;
  }
  .plus::after {
    background: linear-gradient(#333, #333) center / 5px 1px no-repeat, linear-gradient(#333, #333) center / 1px 5px no-repeat, #fff;
  }
  .actions {
    flex: none;
    display: grid;
    grid-template-columns: repeat(4, 1fr);
    gap: 11px;
    padding: 0 8px 0 12px;
  }
  .actions button,
  .closing button {
    height: 20px;
    border: 1px solid #b0b0b0;
    background: #e1e1e1;
  }
  .actions button:disabled {
    border-color: #ccc;
    background: #ccc;
    color: #999;
  }
  label {
    display: flex;
    align-items: center;
    gap: 3px;
    height: 15px;
    white-space: nowrap;
  }
  .toggle {
    flex: none;
    margin: 4px 0 0 13px;
  }
  input[type="checkbox"],
  input[type="radio"] {
    flex: none;
    appearance: none;
    width: 13px;
    height: 13px;
    border: 1px solid #444;
    background: #fff;
  }
  input[type="radio"] {
    border-radius: 50%;
  }
  input[type="radio"]:checked {
    background: radial-gradient(circle, #222 3px, #fff 4px);
  }
  input[type="checkbox"]:checked {
    background: #333;
  }
  fieldset {
    flex: none;
    margin: 0 5px 0 6px;
    padding: 3px 0 5px 6px;
    border: 1px solid #dcdcdc;
    min-width: 0;
  }
  legend {
    padding: 0 2px;
    line-height: 14px;
  }
  .options {
    display: grid;
    grid-template-columns: 178px 1fr;
    font-size: 10px;
  }
  .list {
    display: block;
    width: 268px;
    height: 19px;
    margin: 4px 0 0 3px;
    padding: 0 3px;
    border: 1px solid #888;
  }
  .closing {
    flex: none;
    display: flex;
    justify-content: flex-end;
    gap: 9px;
    padding: 9px 7px 8px;
  }
  .closing button {
    width: 62px;
  }
  .closing .default {
    border: 2px solid #1c78cc;
  }

  .status {
    flex: none;
    position: relative;
    height: 20px;
    display: flex;
    align-items: center;
    border-top: 1px solid #ccc;
    background: #f0f0f0;
  }
  .hint {
    flex: 1;
  }
  .cell1 {
    width: 69px;
    border-right: 1px solid #ccc;
    white-space: nowrap;
    overflow: hidden;
  }
  .cell2 {
    width: 247px;
    padding-left: 4px;
  }
  .recorder {
    position: absolute;
    right: 0;
    bottom: 0;
    width: 213px;
    height: 27px;
    display: flex;
    align-items: center;
    background: linear-gradient(#272d40, #3c4358);
    border-radius: 3px 0 0 0;
    color: #dde;
  }
  .recorder > * {
    height: 100%;
    display: flex;
    align-items: center;
    justify-content: center;
    border-right: 1px solid #474e63;
  }
  .recorder > :nth-child(1) { width: 44px; }
  .recorder > :nth-child(2) { width: 54px; }
  .recorder > :nth-child(3) { width: 62px; }
  .recorder > :nth-child(4) { width: 29px; }
  .recorder > :nth-child(5) {
    flex: 1;
    border: 0;
  }
  .recorder svg {
    width: 10px;
    height: 10px;
    fill: #c9ccd6;
  }
</style>
